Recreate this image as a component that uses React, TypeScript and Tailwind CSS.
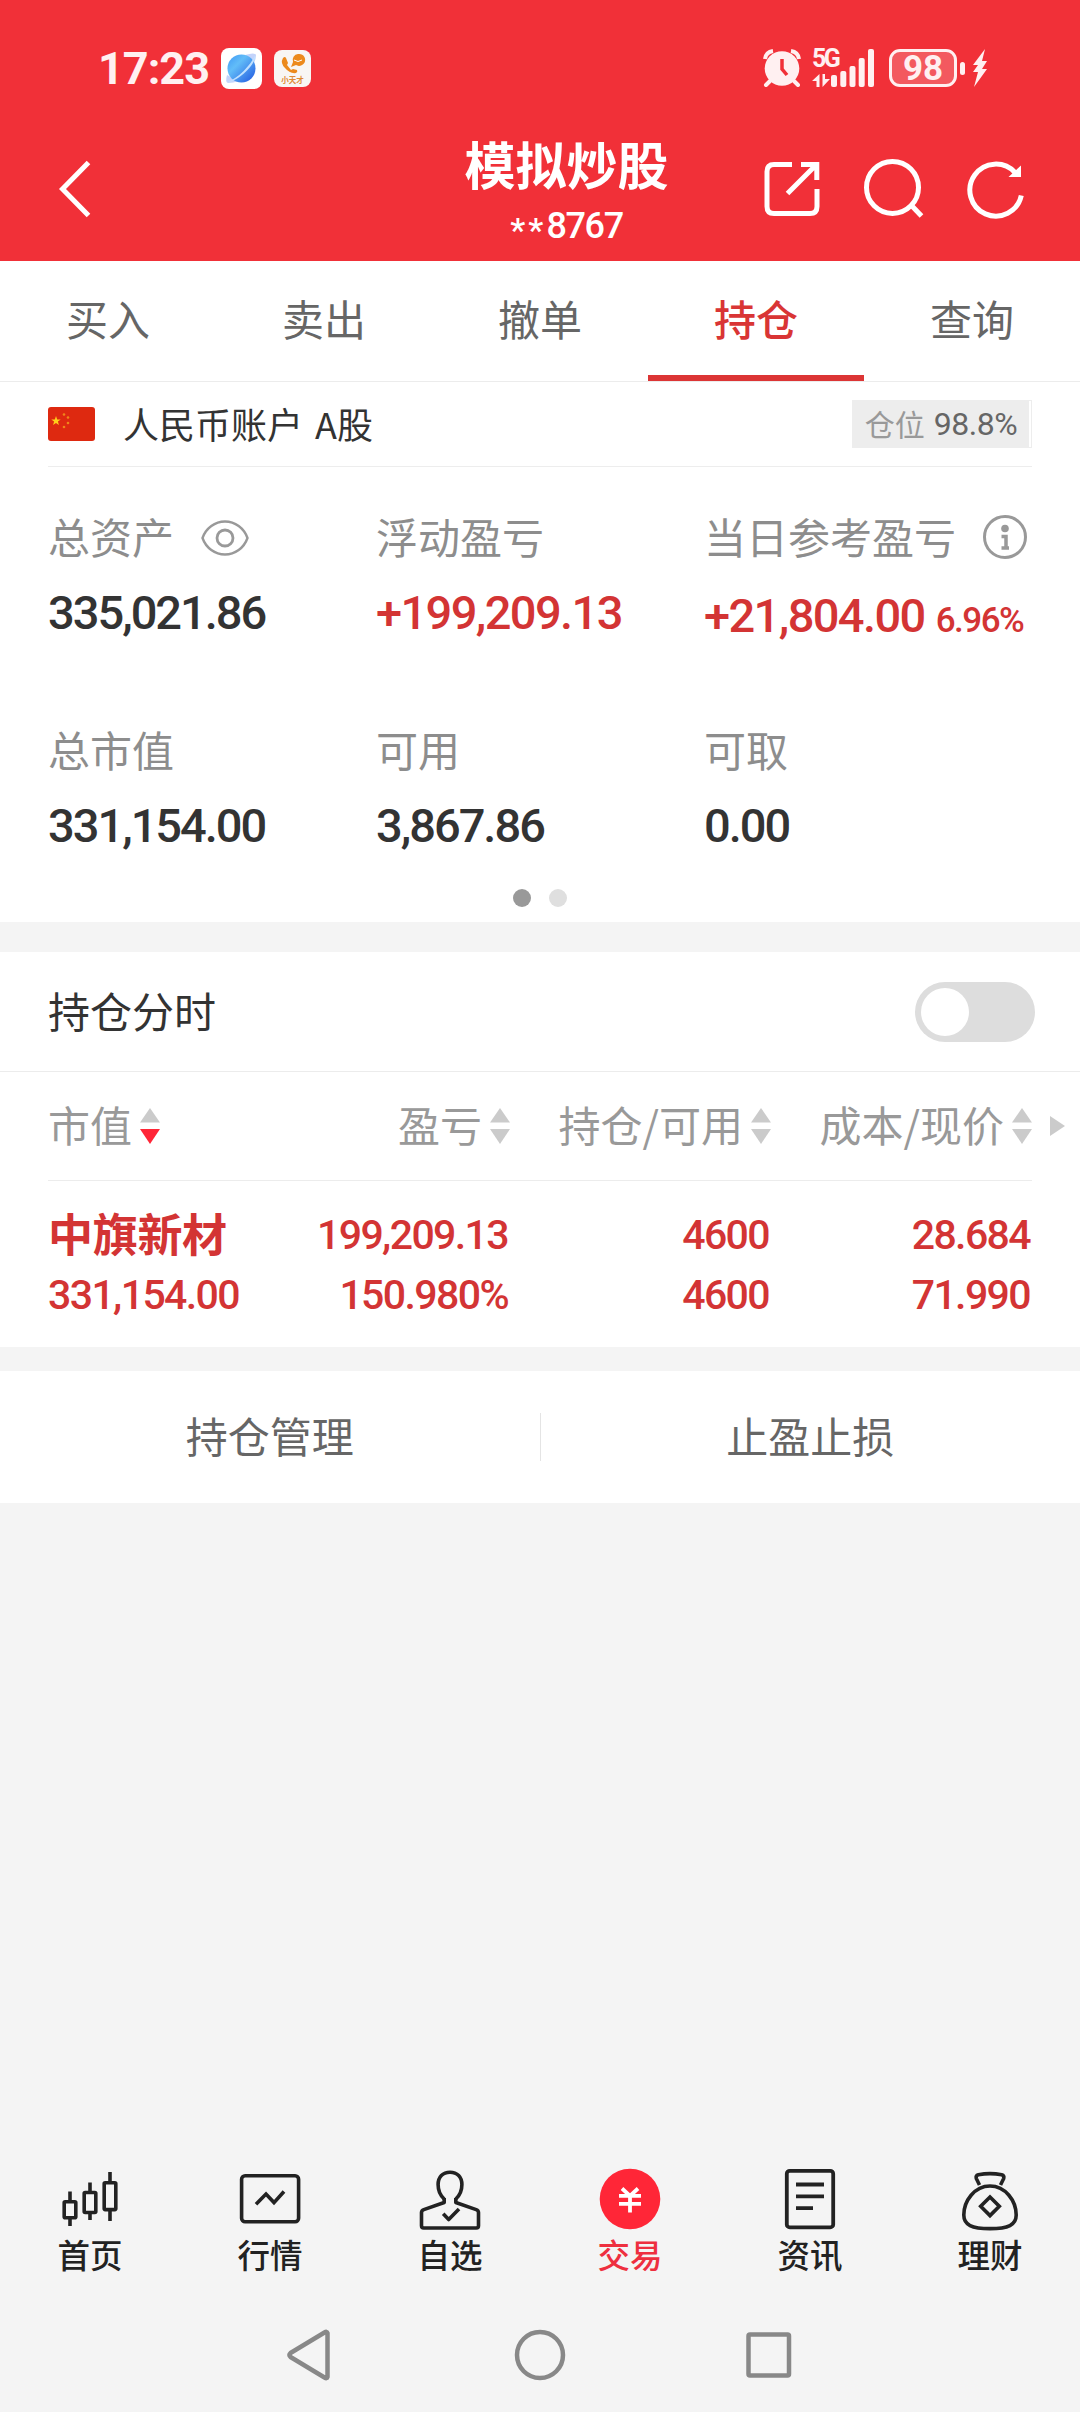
import type { ReactNode } from 'react';
import clsx from 'clsx';

const tabs = ['买入', '卖出', '撤单', '持仓', '查询'];

const navItems = [
  { label: '首页', icon: <CandleIcon /> },
  { label: '行情', icon: <MarketIcon /> },
  { label: '自选', icon: <UserIcon /> },
  { label: '交易', icon: <TradeIcon />, active: true },
  { label: '资讯', icon: <NewsIcon /> },
  { label: '理财', icon: <BagIcon /> },
];

function CandleIcon() {
  return (
    <svg width="64" height="64" viewBox="0 0 64 64" fill="none" stroke="currentColor" strokeWidth="3.6">
      <rect x="6.2" y="34.8" width="11.6" height="16" rx="1" />
      <rect x="26.2" y="25.5" width="11.6" height="20" rx="1" />
      <rect x="46.2" y="15.8" width="11.6" height="26.8" rx="1" />
      <path d="M12 24.5v10M12 51v8M32 15.5v10M32 45.5v7.5M52 5v11M52 42.5V54" />
    </svg>
  );
}

function MarketIcon() {
  return (
    <svg width="64" height="64" viewBox="0 0 64 64" fill="none" stroke="currentColor" strokeWidth="3.6">
      <rect x="3.6" y="8.8" width="57" height="46" rx="3.5" />
      <path d="M18 37.2 28 27l8 8.6L46 24.5" />
    </svg>
  );
}

function UserIcon() {
  return (
    <svg width="64" height="64" viewBox="0 0 64 64" fill="none" stroke="currentColor" strokeWidth="3.6" strokeLinejoin="round">
      <path d="M26.2 31v4.5L5.8 42.6q-2.3.9-2.3 3v13.200q0 2.200 2.200 2.200h52.600q2.200 0 2.200-2.200V45.600q0-2.100-2.300-3L37.800 35.500V31" />
      <path d="M26.2 32C21.3 27.800 20.100 24 20.100 17.600 20.100 10 24.800 5.200 32 5.200S43.900 10 43.900 17.600c0 6.400-1.200 10.200-6.100 14.400" />
      <path d="m25.2 46.800 5.500 5.700L41 42" />
    </svg>
  );
}

function TradeIcon() {
  return (
    <svg width="64" height="64" viewBox="0 0 64 64" fill="none" stroke="white" strokeWidth="3.8">
      <circle cx="32" cy="32" r="30.3" fill="#ff2637" stroke="none" />
      <path d="m24 21.5 8 7.5 8-7.500M21 28.800h22M21 36.800h22M32 28v17.500" />
    </svg>
  );
}

function NewsIcon() {
  return (
    <svg width="64" height="64" viewBox="0 0 64 64" fill="none" stroke="currentColor" strokeWidth="3.8">
      <rect x="8.8" y="3.8" width="46.4" height="56.6" rx="3" />
      <path d="M18 17.5h28M18 29.3h28M18 41.2h17" />
    </svg>
  );
}

function BagIcon() {
  return (
    <svg width="64" height="64" viewBox="0 0 64 64" fill="none" stroke="currentColor" strokeWidth="3.6" strokeLinejoin="round">
      <path d="M21.5 18 18.3 11.5q-.8-3 2-3.8 11.700-2.200 23.400 0 2.800.8 2 3.800L42.500 18" />
      <path d="M32 19C16.5 19 5.800 34 5.800 48c0 10 8 13.600 26.200 13.600S58.200 58 58.200 48C58.200 34 47.500 19 32 19Z" />
      <path d="m32 30 9.300 9.300-9.300 9.300-9.300-9.300Z" strokeLinejoin="miter" />
    </svg>
  );
}

function SortArrows({ active }: { active?: boolean }) {
  return (
    <svg width="20" height="36" viewBox="0 0 20 36" className="shrink-0">
      <path d="M10 0 20 14.5H0Z" fill="#cbcbcb" />
      <path d="M10 36 20 21H0Z" fill={active ? '#ff2637' : '#cbcbcb'} />
    </svg>
  );
}

function StatusBar() {
  return (
    <div className="flex h-[136px] items-center pl-[98px] pr-[93px] text-[#fff0f1]">
      <span className="w-[123px] font-['Roboto',sans-serif] text-[45px] font-bold leading-none tracking-[-1px]">17:23</span>
      <svg width="41" height="41" viewBox="0 0 41 41">
        <defs>
          <linearGradient id="planet" x1="0" y1="0" x2="1" y2="1">
            <stop offset="0" stopColor="#3f97f5" />
            <stop offset="0.35" stopColor="#62bdf8" />
            <stop offset="1" stopColor="#1f55e0" />
          </linearGradient>
        </defs>
        <rect width="41" height="41" rx="8" fill="white" />
        <path d="M24 7q10-3 11 0 0 5-3 10zM6 27q-2 7 1 8 5 0 11-2z" fill="#c3d3fa" />
        <circle cx="20.5" cy="20.5" r="14" fill="url(#planet)" />
        <path d="M34 7.5c2 7-15 25-27.500 27 11-5 23-17 27.500-27Z" fill="#bfe0ff" />
      </svg>
      <svg width="37" height="37" viewBox="0 0 37 37" className="ml-3">
        <rect width="37" height="37" rx="8" fill="#f8f6f4" />
        <path d="M9 8q-3 5 2 10 5 6 11 5 2-1 1-3l-4-1-2 1-4-5 1-2-2-5q-1-2-3 0Z" fill="#ec8a1d" />
        <path d="M24 4a6 6 0 1 1-2 11l-5 2 2-5a6 6 0 0 1 5-8Z" fill="#ec8a1d" />
        <path d="M20 10q4 3 8 0" fill="none" stroke="#fff" strokeWidth="1" />
        <text x="18.5" y="32.5" textAnchor="middle" fontSize="7.5" fontFamily="Noto Sans CJK SC, sans-serif" fontWeight="700" fill="#e08a35">小天才</text>
      </svg>
      <div className="ml-auto flex items-center">
        <svg width="38" height="38" viewBox="0 0 38 38" fill="none" stroke="currentColor">
          <circle cx="19" cy="19.5" r="17.3" fill="currentColor" stroke="none" />
          <path d="M2 10q1-7 8-8M36 10q-1-7-8-8" strokeWidth="4" />
          <path d="m7 32-4 4M31 32l4 4" strokeWidth="4" strokeLinecap="round" />
          <path d="M19 10v10l5 6" stroke="#f13038" strokeWidth="3.5" />
        </svg>
        <div className="ml-[11px] flex h-[38px] items-end">
          <div className="flex h-[38px] w-[18px] flex-col justify-between">
            <span className="font-['Roboto',sans-serif] text-[25px] font-bold leading-[20px] tracking-[-2.5px]">5G</span>
            <svg width="18" height="13" viewBox="0 0 18 13" fill="currentColor">
              <path d="M7.5 0v13h-3V7H0ZM10.500 13V0h2.500v5H18Z" />
            </svg>
          </div>
          <svg width="44" height="38" viewBox="0 0 44 38" fill="currentColor" className="ml-px">
            <rect x="0" y="26" width="6" height="12" rx="2" />
            <rect x="9.3" y="22" width="6" height="16" rx="2" />
            <rect x="18.5" y="17" width="6" height="21" rx="2" />
            <rect x="27.7" y="9" width="6" height="29" rx="2" />
            <rect x="37" y="0" width="6" height="38" rx="2" />
          </svg>
        </div>
        <div className="ml-[14px] flex h-[38px] w-[68px] items-center justify-center rounded-[11px] border-3 border-current bg-white/20">
          <span className="font-['Roboto',sans-serif] text-[35px] font-bold leading-none">98</span>
        </div>
        <div className="ml-[3px] h-[13px] w-[5px] rounded-sm bg-[#fff0f1]" />
        <svg width="15" height="38" viewBox="0 0 15 38" fill="currentColor" className="ml-[7px]">
          <path d="M13 0 1 16h5l-5 7h5L2 38 15 20h-5l5-8h-5Z" />
        </svg>
      </div>
    </div>
  );
}

function Header() {
  return (
    <header className="h-[261px] bg-[#f13038] text-white">
      <StatusBar />
      <div className="flex">
        <div className="flex w-[324px] pl-[58px] pt-6">
          <svg width="34" height="58" viewBox="0 0 34 58" fill="none" stroke="currentColor" strokeWidth="5">
            <path d="M30.5 2.5 4.500 29l26 26.500" />
          </svg>
        </div>
        <div className="flex w-[488px] flex-col items-center pr-[3px]">
          <h1 className="-mt-px text-[51px] font-bold leading-[56px]">模拟炒股</h1>
          <div className="mt-[17px] flex h-9 items-center font-['Roboto',sans-serif] text-[36px] font-medium leading-none tracking-[-1.4px]">
            <span className="mt-2 text-[34px] tracking-[3px]">**</span>
            <span>8767</span>
          </div>
        </div>
        <div className="flex pt-[22px]">
          <svg width="276" height="62" viewBox="760 158 276 62" fill="none" stroke="currentColor" strokeWidth="5" className="-ml-[52px]">
            <path d="M792 164.5h-18q-7 0-7 7v35q0 7 7 7h36q7 0 7-7V189" />
            <path d="M801 164.5h15.800V180M787.500 193.500l28-28" />
            <circle cx="892.5" cy="187.4" r="26" />
            <path d="m911.5 205.5 10 10.500" />
            <path d="M1015 172.5a26 26 0 1 0 6.300 23" />
            <path d="M1021 165.5V177h-12.500Z" fill="currentColor" stroke="none" />
          </svg>
        </div>
      </div>
    </header>
  );
}

function Asset({ label, value, extra, icon, red }: { label: string; value: string; extra?: string; icon?: ReactNode; red?: boolean }) {
  return (
    <div className="h-[213px]">
      <div className="flex h-[50px] items-center text-[42px] leading-[50px] text-[#8d8d8d]">
        {label}
        {icon}
      </div>
      <div
        className={clsx(
          "flex h-[104px] items-center whitespace-nowrap font-['Roboto',sans-serif] text-[47px] font-medium",
          red ? 'tracking-[-1.6px] text-[#d33434]' : 'tracking-[-2px] text-[#333333]',
        )}
      >
        {extra ? (
          <span className="pt-1.5">
            {value}
            <span className="ml-[11px] text-[35px] tracking-[-1.5px]">{extra}</span>
          </span>
        ) : (
          value
        )}
      </div>
    </div>
  );
}

function EyeIcon() {
  return (
    <svg width="48" height="36" viewBox="0 0 48 36" fill="none" stroke="#999" className="ml-[27px] mt-1">
      <path d="M1.5 18C5 8 14 1.500 24 1.500S43 8 46.500 18C43 28 34 34.500 24 34.500S5 28 1.500 18Z" strokeWidth="2.4" />
      <circle cx="24" cy="18" r="8" strokeWidth="2.8" />
    </svg>
  );
}

function InfoIcon() {
  return (
    <svg width="44" height="44" viewBox="0 0 44 44" fill="none" stroke="#999" strokeWidth="3" className="ml-[27px] mt-0.5">
      <circle cx="22" cy="22" r="20.5" />
      <circle cx="22" cy="13.5" r="3.8" fill="#999" stroke="none" />
      <path d="M18.5 21.5H23V33M18.500 33h7.500" strokeWidth="3.5" />
    </svg>
  );
}

function Account() {
  return (
    <section className="h-[540px] bg-white">
      <div className="mx-12 flex h-[85px] items-center border-b border-[#ededed]">
        <svg width="47" height="34" viewBox="0 0 47 34">
          <rect width="47" height="34" rx="3" fill="#de2910" />
          <path d="m8 9 1.200 3.400h3.500L9.900 14.500l1 3.400L8 15.900l-2.900 2 1-3.400-2.800-2.100h3.500Z" fill="#ffcf1a" />
          <g fill="#f0861a">
            <circle cx="16" cy="7.5" r="1.3" />
            <circle cx="20" cy="10.5" r="1.3" />
            <circle cx="20" cy="16" r="1.3" />
            <circle cx="16" cy="20" r="1.3" />
          </g>
        </svg>
        <span className="ml-7 pb-[3px] text-[36px] text-[#333] [word-spacing:4px]">人民币账户 A股</span>
        <div className="ml-auto flex h-12 w-[180px] border border-[#ededed] pr-0.5">
          <div className="flex flex-1 items-center justify-center gap-[9px] bg-[#ededed]">
            <span className="pb-[3px] text-[30px] leading-none text-[#999]">仓位</span>
            <span className="font-['Roboto',sans-serif] text-[32px] leading-none tracking-[-0.5px] text-[#666]">98.8%</span>
          </div>
        </div>
      </div>
      <div className="grid h-[421px] grid-cols-3 px-12 pt-[44px]">
        <Asset label="总资产" value="335,021.86" icon={<EyeIcon />} />
        <Asset label="浮动盈亏" value="+199,209.13" red />
        <Asset label="当日参考盈亏" value="+21,804.00" extra="6.96%" icon={<InfoIcon />} red />
        <Asset label="总市值" value="331,154.00" />
        <Asset label="可用" value="3,867.86" />
        <Asset label="可取" value="0.00" />
      </div>
      <div className="flex justify-center gap-[18px] pt-px">
        <i className="size-[18px] rounded-full bg-[#999]" />
        <i className="size-[18px] rounded-full bg-[#dfdfdf]" />
      </div>
    </section>
  );
}

function HeadCell({ label, active, className }: { label: string; active?: boolean; className?: string }) {
  return (
    <div className={clsx('flex items-center gap-2', className)}>
      <span className="whitespace-nowrap pb-[6px]">{label}</span>
      <SortArrows active={active} />
    </div>
  );
}

function Positions() {
  return (
    <section className="mt-[30px] h-[395px] bg-white">
      <div className="flex h-[120px] items-center justify-between border-b border-[#ececec] pl-12 pr-[45px] text-[42px] text-[#333]">
        <span className="pb-1">持仓分时</span>
        <button className="flex h-[60px] w-[120px] items-center rounded-full bg-[#ddd] px-1.5">
          <i className="size-12 rounded-full bg-white" />
        </button>
      </div>
      <div className="flex">
        <div className="ml-12 grid h-[109px] w-[984px] grid-cols-[201px_261px_261px_261px] items-center border-b border-[#ececec] text-[42px] text-[#999]">
          <HeadCell label="市值" active />
          <HeadCell label="盈亏" className="justify-end" />
          <HeadCell label="持仓/可用" className="justify-end" />
          <HeadCell label="成本/现价" className="justify-end" />
        </div>
        <svg width="15" height="20" viewBox="0 0 15 20" className="ml-[18px] mt-[44px]">
          <path d="M0 0 15 10 0 20Z" fill="#cbcbcb" />
        </svg>
      </div>
      <div className="mx-12 grid grid-cols-[199px_261px_261px_261px] pt-6 font-['Roboto',sans-serif] text-[41px] font-medium leading-[60px] tracking-[-1.6px] text-[#d33434]">
        <div>
          <div className="-mt-0.5 mb-0.5 whitespace-nowrap font-['Noto_Sans_CJK_SC',sans-serif] text-[45px] font-bold tracking-[-0.3px]">中旗新材</div>
          <div>331,154.00</div>
        </div>
        <div className="text-right">
          <div>199,209.13</div>
          <div>150.980%</div>
        </div>
        <div className="text-right">
          <div>4600</div>
          <div>4600</div>
        </div>
        <div className="text-right">
          <div>28.684</div>
          <div>71.990</div>
        </div>
      </div>
    </section>
  );
}

export default function App() {
  return (
    <div className="flex h-[2412px] w-[1080px] flex-col overflow-hidden bg-[#f4f4f4] font-['Noto_Sans_CJK_SC',sans-serif]">
      <Header />
      <nav className="grid h-[121px] grid-cols-5 border-b border-[#ececec] bg-white">
        {tabs.map((tab) => (
          <div
            key={tab}
            className={clsx(
              'flex h-[120px] items-center justify-center border-b-[6px] pb-px text-[42px]',
              tab === '持仓' ? 'border-[#dc3535] font-medium text-[#d93535]' : 'border-transparent text-[#666]',
            )}
          >
            {tab}
          </div>
        ))}
      </nav>
      <Account />
      <Positions />
      <section className="mt-6 flex h-[132px] items-center bg-white text-[42px] text-[#666]">
        <div className="flex-1 pb-[5px] text-center">持仓管理</div>
        <div className="h-12 w-px bg-[#e4e4e4]" />
        <div className="flex-1 pb-[5px] text-center">止盈止损</div>
      </section>

      <footer className="mt-auto h-[245px]">
        <div className="grid grid-cols-6">
          {navItems.map((item) => (
            <div key={item.label} className={clsx('flex flex-col items-center', item.active ? 'text-[#ee2f3f]' : 'text-[#222]')}>
              {item.icon}
              <span className="text-[32.5px] font-medium leading-[46px]">{item.label}</span>
            </div>
          ))}
        </div>
        {/* system buttons */}
        <div className="flex justify-center pt-[50px]">
          <svg width="508" height="56" viewBox="286 2327 508 56" fill="none" stroke="#888" strokeWidth="4.5" strokeLinejoin="round">
            <path d="M327.5 2333v44q-.5 2-3 .5l-34-20.500q-2-2 0-4l34-20.500q2.500-1.500 3 .5Z" />
            <circle cx="540" cy="2355" r="23" />
            <rect x="748.5" y="2334.5" width="40.5" height="41" rx="1.5" />
          </svg>
        </div>
      </footer>
    </div>
  );
}
